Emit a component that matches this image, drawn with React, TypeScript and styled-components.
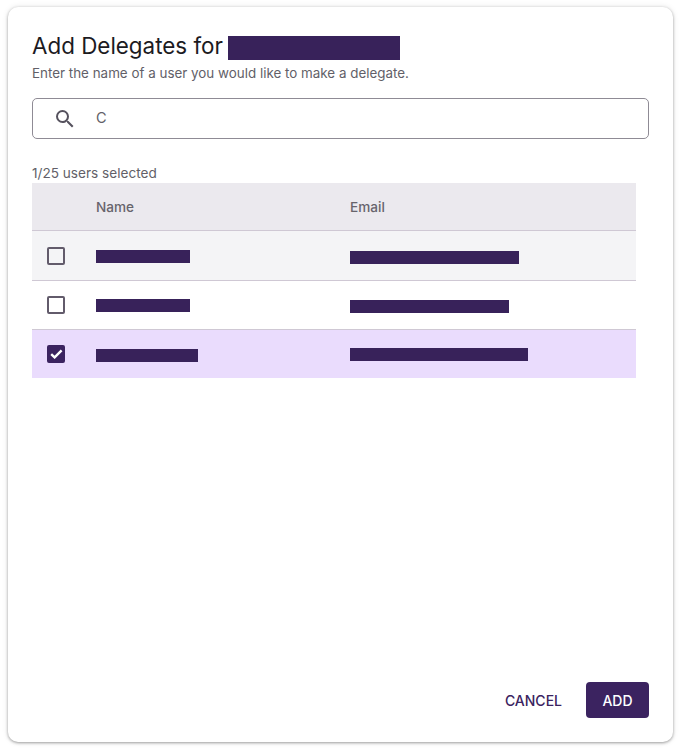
import React from 'react';
import styled, { createGlobalStyle } from 'styled-components';
import { MdSearch } from 'react-icons/md';

const GlobalStyle = createGlobalStyle`
  html, body {
    margin: 0;
    padding: 0;
    background: #fff;
    font-family: Inter, "Liberation Sans", sans-serif;
  }
`;

const Page = styled.div`
  padding: 7px 8px 10px;
  box-sizing: border-box;
  width: 681px;
  height: 752px;
`;

const Dialog = styled.div`
  display: flex;
  flex-direction: column;
  box-sizing: border-box;
  width: 665px;
  height: 735px;
  padding: 24px;
  background: #fff;
  border-radius: 10px;
  box-shadow: 0 1px 3px rgba(0, 0, 0, 0.35), 0 0 6px rgba(0, 0, 0, 0.1);
`;

const Title = styled.h2`
  display: flex;
  align-items: flex-start;
  gap: 5px;
  margin: 0;
  height: 30px;
  font-size: 22.4px;
  font-weight: 400;
  line-height: 30px;
  color: #1c1b1f;
`;

const Subtitle = styled.p`
  margin: 3px 0 0;
  font-size: 13.4px;
  line-height: 18px;
  color: #625f68;
`;

const SearchBox = styled.div`
  display: flex;
  align-items: center;
  box-sizing: border-box;
  height: 41px;
  margin-top: 16px;
  padding-left: 20px;
  border: 1.5px solid #8f8b95;
  border-radius: 5px;
  color: #56525e;
`;

const SearchText = styled.span`
  margin-left: 19px;
  margin-bottom: 2px;
  font-size: 14.5px;
  color: #625f68;
`;

const Count = styled.div`
  margin-top: 25px;
  font-size: 13.6px;
  line-height: 19px;
  color: #625f68;
`;

const Table = styled.div`
  width: 604px;
`;

const Row = styled.div<{ $bg: string; $height: number; $line?: boolean }>`
  display: grid;
  grid-template-columns: 64px 254px 1fr;
  align-items: center;
  box-sizing: border-box;
  height: ${(p) => p.$height}px;
  background: ${(p) => p.$bg};
  border-bottom: ${(p) => (p.$line ? '1px solid #cfc8d4' : 'none')};
`;

const HeadCell = styled.div`
  font-size: 13.6px;
  font-weight: 500;
  color: #67646c;
`;

const CheckCell = styled.div`
  display: flex;
  justify-content: center;
  box-sizing: border-box;
  width: 48px;
`;

const Box = styled.span<{ $checked?: boolean }>`
  display: flex;
  flex: none;
  align-items: center;
  justify-content: center;
  box-sizing: border-box;
  width: 18px;
  height: 18px;
  border-radius: 2px;
  border: 2px solid ${(p) => (p.$checked ? '#3b2360' : '#625b6b')};
  background: ${(p) => (p.$checked ? '#3b2360' : 'transparent')};
`;

const Redaction = styled.div<{ $width: number; $shift?: number }>`
  width: ${(p) => p.$width}px;
  height: 13px;
  margin-top: ${(p) => (p.$shift ?? 0) * 2}px;
  background: #38225a;
`;

const TitleRedaction = styled(Redaction)`
  height: 24px;
  margin-top: 5px;
`;

const Spacer = styled.div`
  flex: 1;
`;

const Actions = styled.div`
  display: flex;
  justify-content: flex-end;
  align-items: center;
  gap: 12px;
`;

const CancelButton = styled.button`
  height: 36px;
  padding: 0 12px;
  border: none;
  background: none;
  font: 500 14px Inter, "Liberation Sans", sans-serif;
  color: #3b2360;
`;

const AddButton = styled.button`
  width: 63px;
  height: 36px;
  border: none;
  border-radius: 4px;
  background: #3b2360;
  font: 500 14px Inter, "Liberation Sans", sans-serif;
  color: #fff;
`;

const rows = [
  { name: 94, nameShift: 1, email: 169, emailShift: 2, bg: '#f4f4f6', line: true, height: 50 },
  { name: 94, nameShift: 0.5, email: 159, emailShift: 1.5, bg: '#ffffff', line: true, height: 49 },
  { name: 102, nameShift: 1.5, email: 178, emailShift: 0.5, bg: '#eadcfd', line: false, height: 48, checked: true },
];

export default function App() {
  return (
    <Page>
      <GlobalStyle />
      <Dialog>
        <Title>
          Add Delegates for <TitleRedaction $width={172} />
        </Title>
        <Subtitle>Enter the name of a user you would like to make a delegate.</Subtitle>
        <SearchBox>
          <MdSearch size={24} />
          <SearchText>C</SearchText>
        </SearchBox>
        <Count>1/25 users selected</Count>
        <Table>
          <Row $bg="#ebe9ee" $height={48} $line>
            <span />
            <HeadCell>Name</HeadCell>
            <HeadCell>Email</HeadCell>
          </Row>
          {rows.map((r, i) => (
            <Row key={i} $bg={r.bg} $height={r.height} $line={r.line}>
              <CheckCell>
                <Box $checked={r.checked}>
                  {r.checked && (
                    <svg width="13" height="10" viewBox="0 0 13 10">
                      <path d="M1.2 5.2 4.6 8.4 11.6 1.4" fill="none" stroke="#fff" strokeWidth="2.4" />
                    </svg>
                  )}
                </Box>
              </CheckCell>
              <Redaction $width={r.name} $shift={r.nameShift} />
              <Redaction $width={r.email} $shift={r.emailShift} />
            </Row>
          ))}
        </Table>
        <Spacer />
        <Actions>
          <CancelButton>CANCEL</CancelButton>
          <AddButton>ADD</AddButton>
        </Actions>
      </Dialog>
    </Page>
  );
}
